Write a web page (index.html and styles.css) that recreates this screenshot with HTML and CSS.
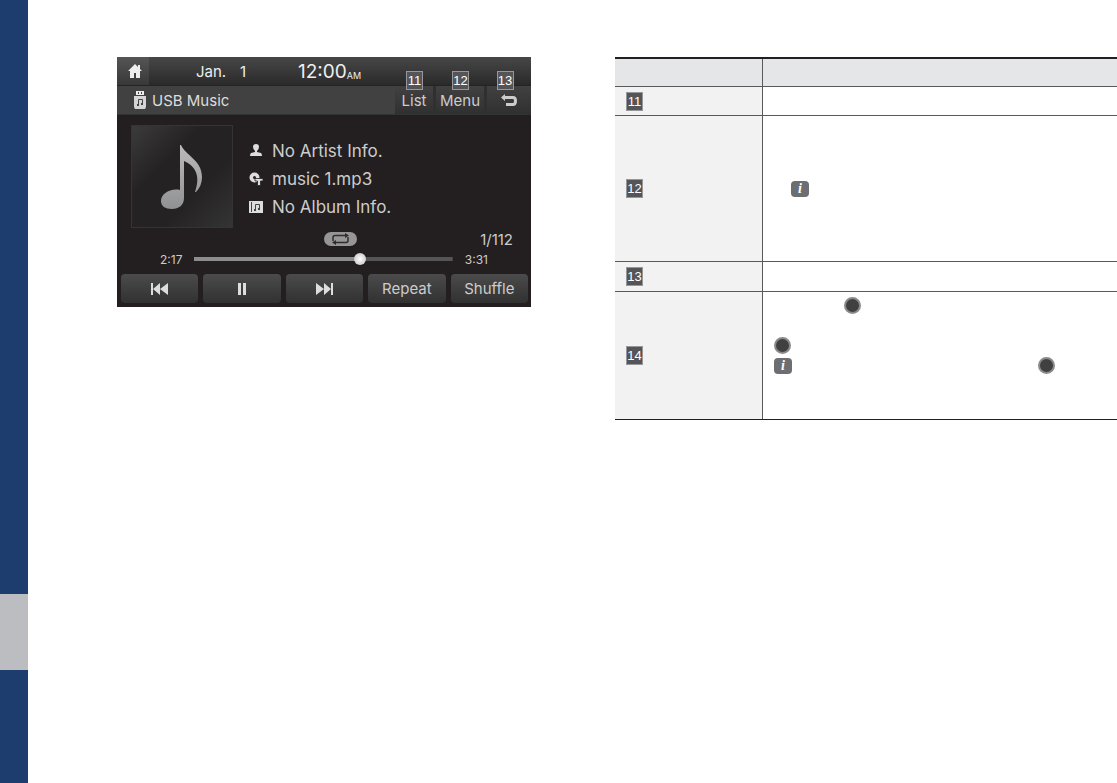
FILE: index.html
```
<!DOCTYPE html>
<html lang="en">
<head>
	<meta charset="utf-8">
	<title>USB Music</title>
	<link rel="stylesheet" href="styles.css">
</head>
<body>
	<div class="side">
		<div class="sideTab"></div>
	</div>
	<main class="page">
		<section class="screen">
			<header class="status">
				<button class="home" aria-label="Home">
					<svg width="16" height="16" viewBox="0 0 16 16"><path fill="#eee" d="M8 1L1 8h2v7h4v-5h2v5h4V8h2l-2-2V2h-2v2z"/></svg>
				</button>
				<span class="month">Jan.</span>
				<span class="day">1</span>
				<span class="time">12:00</span>
				<span class="ampm">AM</span>
			</header>
			<div class="titleBar">
				<svg width="12" height="18" viewBox="0 0 12 18">
					<path fill="#eee" d="M2 0h8v4H2z"/>
					<path fill="#444" d="M4 1h1v2H4zM7 1h1v2H7z"/>
					<path fill="#d5d5d5" d="M0 5h12v11l-1 2H1l-1-2z"/>
					<path fill="none" stroke="#444" d="M4.500 14V8.500h4V13"/>
					<path fill="#444" d="M3 13h2v2H3zM7 12h2v2H7z"/>
				</svg>
				<h1>USB Music</h1>
				<div class="tools">
					<button class="list"><span class="num">11</span>List</button>
					<button class="menu"><span class="num">12</span>Menu</button>
					<button class="back" aria-label="Back"><span class="num">13</span>
						<svg width="18" height="13" viewBox="0 0 18 13"><path fill="#ccc" d="M5 0v2h8q4 0 4 5t-4 5H6V9h7q1 0 1-2t-1-2H5v2L1 3.500z"/></svg>
					</button>
				</div>
			</div>
			<div class="track">
				<div class="cover">
					<svg width="42" height="64" viewBox="0 0 42 64">
						<defs>
							<linearGradient id="noteFill" x1="0" y1="0" x2="0" y2="1">
								<stop offset="0" stop-color="#bbb"/>
								<stop offset="1" stop-color="#909193"/>
							</linearGradient>
						</defs>
						<path fill="url(#noteFill)" d="M19 0h1C24 10 41 15 41 32c0 6-2 11-6 15h-1c6-17 0-26-11-31v37c0 7-5 11-12 11C4 64 0 61 0 56c0-7 9-13 19-11z"/>
					</svg>
				</div>
				<ul class="info">
					<li>
						<svg width="14" height="14" viewBox="0 0 14 14"><path fill="#ddd" d="M7 0a3 3 0 0 1 3 3q0 2-2 4v1l4 1q1 1 1 3H1q0-2 1-3l4-1V7Q4 5 4 3a3 3 0 0 1 3-3z"/></svg>
						No Artist Info.
					</li>
					<li>
						<svg width="14" height="14" viewBox="0 0 14 14"><circle cx="5.500" cy="5.500" r="5" fill="#ddd"/><circle cx="5.500" cy="5.500" r="1.500" fill="#231f20"/><path fill="#ddd" stroke="#231f20" stroke-width=".8" d="M6 6.500h8V9h-2.500v4.500h-3V9H6z"/></svg>
						music 1.mp3
					</li>
					<li>
						<svg width="14" height="12" viewBox="0 0 14 12"><path fill="#ddd" d="M0 0h14v12H0z"/><path fill="none" stroke="#444" d="M2.500 1v10M6.500 9V3.500h4V8"/><path fill="#444" d="M5 8h2v2H5zM9 7h2v2H9z"/></svg>
						No Album Info.
					</li>
				</ul>
			</div>
			<div class="count">
				<span class="loop">
					<svg width="33" height="14" viewBox="0 0 33 14"><path fill="none" stroke="#302d2e" stroke-width="1.500" d="M22 3.500H11q-2 0-2 2V9M11 10.500h11q2 0 2-2V5"/><path fill="#302d2e" d="M21 1l4 2.500L21 6zM12 8l-4 2.500 4 2.500z"/></svg>
				</span>
				<span class="total">1/112</span>
			</div>
			<div class="progress">
				<label for="seek">2:17</label>
				<input type="range" id="seek" min="0" max="211" value="137">
				<span>3:31</span>
			</div>
			<div class="controls">
				<button aria-label="Previous"><svg width="17" height="12" viewBox="0 0 17 12"><path fill="#ddd" d="M0 0h2v12H0zM9 0v12L2 6zM17 0v12L9 6z"/></svg></button>
				<button aria-label="Pause"><svg width="10" height="12" viewBox="0 0 10 12"><path fill="#ddd" d="M1 0h3v12H1zM6 0h3v12H6z"/></svg></button>
				<button aria-label="Next"><svg width="17" height="12" viewBox="0 0 17 12"><path fill="#ddd" d="M0 0v12l8-6zM8 0v12l7-6zM15 0h2v12h-2z"/></svg></button>
				<button>Repeat</button>
				<button>Shuffle</button>
			</div>
		</section>
		<table class="desc">
			<thead>
				<tr><th></th><th></th></tr>
			</thead>
			<tbody>
				<tr class="rowList">
					<td><span class="num">11</span></td>
					<td></td>
				</tr>
				<tr class="rowMenu">
					<td><span class="num">12</span></td>
					<td><p class="line indent"><i class="note">i</i></p></td>
				</tr>
				<tr class="rowBack">
					<td><span class="num">13</span></td>
					<td></td>
				</tr>
				<tr class="rowKnob">
					<td><span class="num">14</span></td>
					<td>
						<p class="line first"><span class="knob"></span></p>
						<p class="line"></p>
						<p class="line"><span class="knob"></span></p>
						<p class="line last"><i class="note">i</i><span class="knob"></span></p>
						<p class="line"></p>
						<p class="line"></p>
					</td>
				</tr>
			</tbody>
		</table>
	</main>
</body>
</html>
```
FILE: styles.css
```
*{
	box-sizing:border-box;
}
body{
	margin:0;
	min-height:100vh;
	display:flex;
	background:#fff;
	font-family:Inter, "Liberation Sans", sans-serif;
}
button{
	display:flex;
	align-items:center;
	justify-content:center;
	padding:0;
	border:0;
	color:#ccc;
	font:15px Inter, "Liberation Sans", sans-serif;
}
.side{
	width:28px;
	flex:none;
	display:flex;
	flex-direction:column;
	justify-content:flex-end;
	padding-bottom:113px;
	background:#1c3d6e;
}
.sideTab{
	height:76px;
	background:#bcbdc1;
}
.page{
	flex:1;
	display:grid;
	grid-template-columns:414fr 502fr;
	gap:84px;
	align-items:start;
	padding:57px 0 0 89px;
}

/* player */
.screen{
	min-width:0;
	background:#231f20;
	color:#ccc;
}
.status{
	height:29px;
	display:flex;
	align-items:center;
	background:linear-gradient(#474747, #2b2a2b);
	border-bottom:1px solid #252324;
	color:#eee;
}
.home{
	width:32px;
	height:28px;
	padding-left:4px;
	margin-right:47px;
	background:linear-gradient(#555, #383838);
}
.month{
	width:44px;
	font-size:15px;
}
.day{
	width:58px;
	font-size:15px;
}
.time{
	font-size:19px;
}
.ampm{
	font-size:9px;
	padding-top:8px;
}
.titleBar{
	height:29px;
	display:flex;
	align-items:center;
	gap:6px;
	padding-left:17px;
	background:#414141;
	border-bottom:1px solid #333;
}
.titleBar h1{
	margin:0;
	font-size:15px;
	font-weight:normal;
	color:#ddd;
}
.tools{
	align-self:stretch;
	display:flex;
	gap:3px;
	margin-left:auto;
	background:#303030;
}
.tools button{
	position:relative;
	background:linear-gradient(#414141, #303030);
}
.tools .list{
	width:38px;
}
.tools .menu{
	width:48px;
}
.tools .back{
	width:44px;
}
.num{
	display:block;
	width:17px;
	height:19px;
	border:1px solid #96979a;
	background:#555557;
	color:#fff;
	font:13px/17px "Liberation Sans", sans-serif;
	text-align:center;
}
.tools .num{
	position:absolute;
	top:-15px;
	left:50%;
	margin-left:-8px;
}
.tools .back .num{
	left:40%;
}
.track{
	display:flex;
	gap:16px;
	padding:10px 14px 0;
}
.cover{
	width:102px;
	height:103px;
	display:flex;
	align-items:center;
	justify-content:center;
	border:1px solid #353334;
	background:linear-gradient(135deg, #3c3b3b, #242223 35%, #242223 65%, #353435);
}
.info{
	margin:0;
	padding:12px 0 0;
	list-style:none;
	font-size:17px;
	line-height:28px;
}
.info li{
	display:flex;
	align-items:center;
	gap:9px;
}
.count{
	display:grid;
	grid-template-columns:1fr auto 1fr;
	align-items:center;
	height:22px;
	padding:0 18px 0 50px;
	font-size:15px;
}
.loop{
	grid-column:2;
	height:14px;
	border-radius:7px;
	background:#969696;
}
.loop svg{
	display:block;
}
.total{
	text-align:right;
}
.progress{
	display:flex;
	align-items:center;
	gap:12px;
	height:18px;
	padding:0 43px;
	font-size:12px;
}
.progress input{
	flex:1;
	min-width:0;
	height:12px;
	margin:0;
	appearance:none;
	background:linear-gradient(90deg, #8d8d8d 64%, #555 64%) center / 100% 4px no-repeat;
}
.progress input::-webkit-slider-thumb{
	appearance:none;
	width:12px;
	height:12px;
	border-radius:50%;
	background:radial-gradient(#fff, #bbb);
}
.controls{
	display:grid;
	grid-template-columns:repeat(5, 1fr);
	gap:5px;
	padding:6px 3px 4px 4px;
}
.controls button{
	height:29px;
	border-radius:4px;
	background:linear-gradient(#4b4b4b, #323132);
}

/* description table */
.desc{
	width:100%;
	table-layout:fixed;
	border-spacing:0;
	border-top:2px solid #231f20;
	border-bottom:1px solid #231f20;
}
.desc th{
	height:28px;
	background:#e5e6e8;
}
.desc th,
.desc td{
	padding:0 11px;
	border-bottom:1px solid #58595b;
}
.desc th:first-child,
.desc td:first-child{
	width:148px;
	border-right:1px solid #58595b;
}
.desc td:first-child{
	background:#f2f2f2;
}
.desc .rowList td{
	height:29px;
}
.desc .rowMenu td{
	height:146px;
}
.desc .rowBack td{
	height:30px;
}
.desc .rowKnob td{
	height:127px;
	border-bottom:0;
}
.line{
	display:flex;
	align-items:center;
	height:20px;
	margin:0;
}
.indent{
	padding-left:17px;
}
.first{
	padding-left:70px;
}
.last{
	gap:246px;
}
.note{
	flex:none;
	width:18px;
	height:16px;
	border-radius:4px;
	background:#6d6e71;
	color:#fff;
	font:italic bold 14px/16px "Liberation Serif", serif;
	text-align:center;
}
.knob{
	flex:none;
	width:17px;
	height:17px;
	border:2px solid #8a8a8a;
	border-radius:50%;
	background:#404040;
}
```
